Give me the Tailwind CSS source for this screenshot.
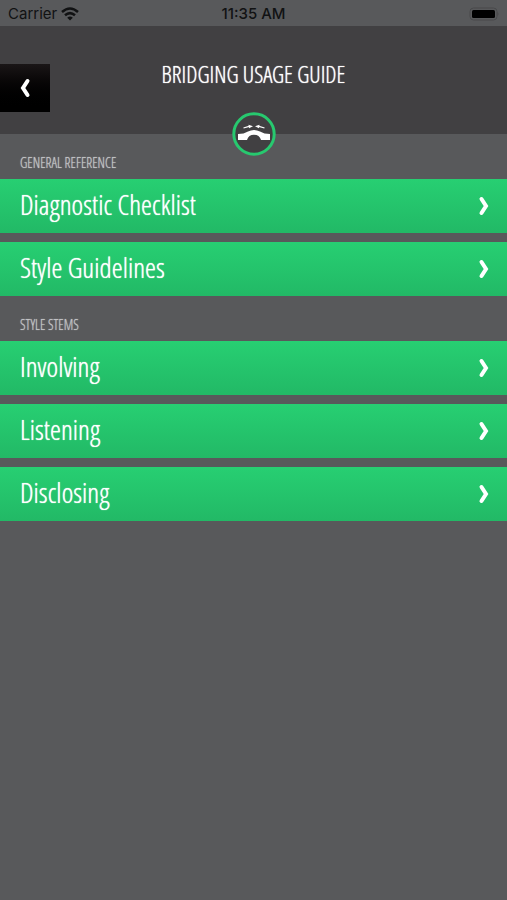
<!DOCTYPE html>
<html lang="en">
<head>
<meta charset="utf-8">
<meta name="viewport" content="width=device-width, initial-scale=1">
<title>Bridging Usage Guide</title>
<script src="https://cdn.jsdelivr.net/npm/@tailwindcss/browser@4"></script>
</head>
<body class="min-h-screen bg-[#58595b] text-white font-light font-['Open_Sans_Condensed_Light','Open_Sans_Condensed','Roboto_Condensed','Liberation_Sans_Narrow',sans-serif]">
<div class="grid grid-cols-3 items-center h-[26px] px-2 pt-px text-[#111213] font-['Inter',sans-serif] text-[15px] leading-5">
  <div class="flex items-center gap-1 font-normal">
    <span>Carrier</span>
    <svg class="w-[18px] h-[14px]" viewBox="0 0 18 14" fill="none" stroke="currentColor" stroke-width="2.5" aria-hidden="true">
      <path d="M1 5Q9-2 17 5"/><path d="M4 8.300Q9 3.900 14 8.300"/><path d="M9 13.500 6.200 10.700Q9 8.500 11.800 10.700Z" fill="currentColor" stroke="none"/>
    </svg>
  </div>
  <span class="text-center font-medium">11:35 AM</span>
  <svg class="justify-self-end w-[30px] h-[14px]" viewBox="0 0 30 14" aria-hidden="true">
    <rect x="1" y="1" width="27" height="12" rx="3.500" fill="none" stroke="#48494b"/><rect x="3" y="3" width="23" height="8" rx="1.500" fill="#000"/><path d="M28.500 5v4q2-2 0-4" fill="#48494b"/>
  </svg>
</div>
<header class="relative h-[108px] bg-[#414042] flex justify-center pt-8">
  <button type="button" aria-label="Back" class="absolute left-0 top-[38px] w-[50px] h-12 flex items-center justify-center bg-linear-to-b from-[#1a1617] to-black">
    <svg class="w-3 h-5" viewBox="0 0 12 20" fill="none" stroke="#fff" stroke-width="4" stroke-linecap="round" aria-hidden="true"><path d="M8.500 3 4 10l4.500 7"/></svg>
  </button>
  <h1 class="text-[23px] leading-8 [text-shadow:0_0_1px_currentColor]">BRIDGING USAGE GUIDE</h1>
  <svg class="absolute left-1/2 -translate-x-1/2 -bottom-[22px] size-11" viewBox="0 0 44 44" aria-hidden="true">
    <circle cx="22" cy="22" r="20.200" fill="#414042" stroke="#27c96f" stroke-width="3"/>
    <path d="M6 22Q12 22 16 19.500Q22 16.500 28 19.500Q32 22 38 22V28H29Q27.500 22.800 22 22.800T15 28H6Z" fill="#fff"/>
    <g stroke="#fff" stroke-width="1.300"><path d="M11.500 16 17 14.400M32.500 16 27 14.400"/></g>
    <path d="M16.500 12.700 21 14.300 17 16.300ZM27.500 12.700 23 14.300 27 16.300Z" fill="#fff"/>
  </svg>
</header>
<main>
  <section>
    <h2 class="h-[45px] pl-5 pt-[19px] text-sm leading-5 text-[#c4c5c7] [text-shadow:0_0_1px_currentColor]">GENERAL REFERENCE</h2>
    <nav class="flex flex-col gap-[9px] text-[28px] leading-8 [text-shadow:0_0_1px_currentColor]">
      <a href="#" class="flex h-[54px] items-center justify-between pl-5 pr-[17px] pb-1 bg-linear-to-b from-[#27cf72] to-[#22b966]"><span>Diagnostic Checklist</span><svg class="mt-1 w-3 h-5" viewBox="0 0 12 20" fill="none" stroke="#fff" stroke-width="4" stroke-linecap="round" aria-hidden="true"><path d="M3.500 3 8 10l-4.500 7"/></svg></a>
      <a href="#" class="flex h-[54px] items-center justify-between pl-5 pr-[17px] pb-1 bg-linear-to-b from-[#27cf72] to-[#22b966]"><span>Style Guidelines</span><svg class="mt-1 w-3 h-5" viewBox="0 0 12 20" fill="none" stroke="#fff" stroke-width="4" stroke-linecap="round" aria-hidden="true"><path d="M3.500 3 8 10l-4.500 7"/></svg></a>
    </nav>
  </section>
  <section>
    <h2 class="h-[45px] pl-5 pt-[19px] text-sm leading-5 text-[#c4c5c7] [text-shadow:0_0_1px_currentColor]">STYLE STEMS</h2>
    <nav class="flex flex-col gap-[9px] text-[28px] leading-8 [text-shadow:0_0_1px_currentColor]">
      <a href="#" class="flex h-[54px] items-center justify-between pl-5 pr-[17px] pb-1 bg-linear-to-b from-[#27cf72] to-[#22b966]"><span>Involving</span><svg class="mt-1 w-3 h-5" viewBox="0 0 12 20" fill="none" stroke="#fff" stroke-width="4" stroke-linecap="round" aria-hidden="true"><path d="M3.500 3 8 10l-4.500 7"/></svg></a>
      <a href="#" class="flex h-[54px] items-center justify-between pl-5 pr-[17px] pb-1 bg-linear-to-b from-[#27cf72] to-[#22b966]"><span>Listening</span><svg class="mt-1 w-3 h-5" viewBox="0 0 12 20" fill="none" stroke="#fff" stroke-width="4" stroke-linecap="round" aria-hidden="true"><path d="M3.500 3 8 10l-4.500 7"/></svg></a>
      <a href="#" class="flex h-[54px] items-center justify-between pl-5 pr-[17px] pb-1 bg-linear-to-b from-[#27cf72] to-[#22b966]"><span>Disclosing</span><svg class="mt-1 w-3 h-5" viewBox="0 0 12 20" fill="none" stroke="#fff" stroke-width="4" stroke-linecap="round" aria-hidden="true"><path d="M3.500 3 8 10l-4.500 7"/></svg></a>
    </nav>
  </section>
</main>
</body>
</html>
